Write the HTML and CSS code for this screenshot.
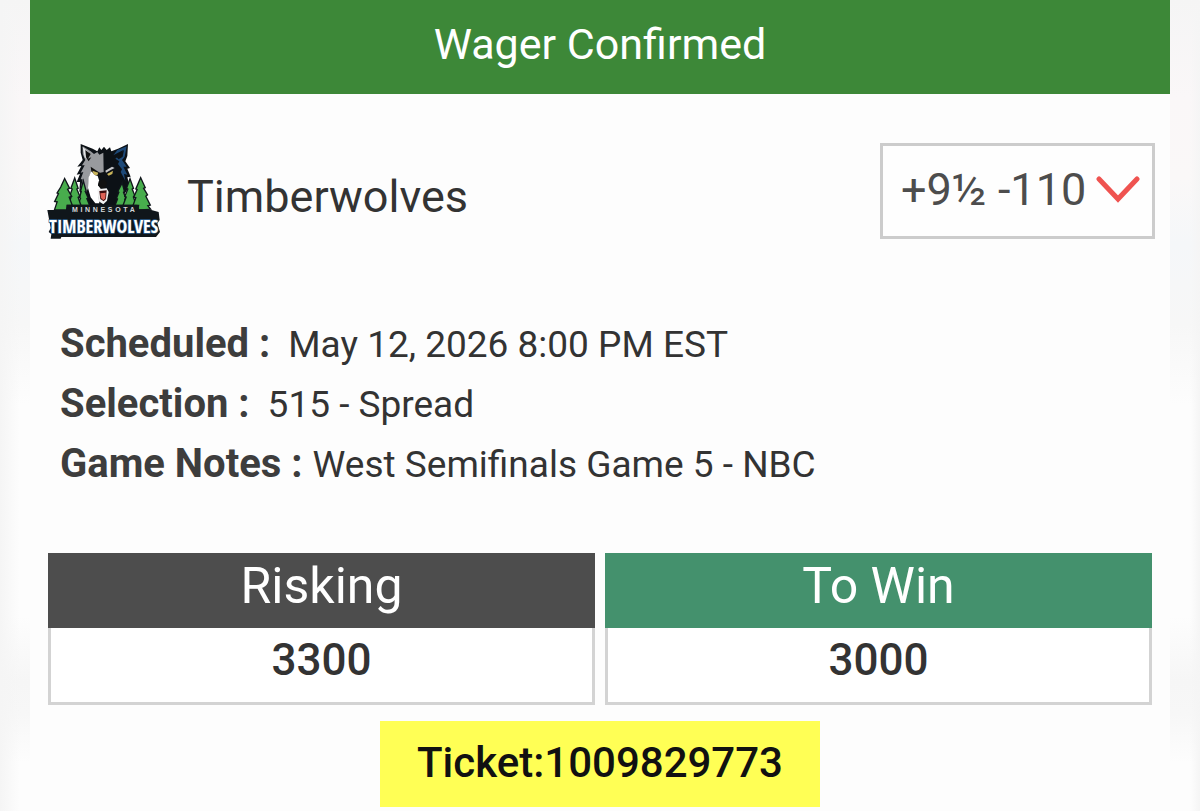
FILE: index.html
```html
<!DOCTYPE html>
<html lang="en">
<head>
  <meta charset="UTF-8">
  <meta name="viewport" content="width=device-width, initial-scale=1.0">
  <title>Wager Confirmed</title>
  <link rel="stylesheet" href="styles.css">
</head>
<body>
  <main class="wager">
    <h1 class="wager-header">Wager Confirmed</h1>

    <div class="team-row">
      <svg class="team-logo" viewBox="33 30 342 294" role="img" aria-label="Minnesota Timberwolves">
        <!-- head -->
        <path fill="#0c1116" d="M134 36L170 50L184 58L190 46L196 54L204 44L212 54L222 46L226 58L246 50L276 36L274 72L268 88L282 108L274 110L284 134L274 136L280 160L272 176L240 220H158L130 178L132 150L122 150L132 126L122 128L136 102L124 104L140 84L134 62Z"/>
        <path fill="#989a9e" d="M140 43L164 58L174 66L184 60L190 68L202 62L203 120L186 124L168 114L160 132L156 170L146 188L134 170L140 142L134 142L142 120L134 122L146 100L138 100L148 84L140 66Z"/>
        <path fill="#e6e7e9" d="M140 45L160 62L152 66L156 82L146 76Z"/>
        <path fill="#111" d="M148 54L164 66L156 80L166 76L158 88L150 76Z"/>
        <path fill="#fff" d="M166 116L184 128L190 148L186 160L194 170L188 180V196L190 214H178L164 196L156 168L158 136Z"/>
        <path fill="#1d4978" d="M272 43L266 74L258 84L272 104L262 104L274 128L264 126L268 146L254 120L258 112L246 96L250 88L238 80L254 66L262 54L246 62L232 70L244 54Z"/>
        <path fill="#0c1116" d="M254 62L264 54L260 74L248 82L242 76Z"/>
        <path fill="#111" d="M164 104L182 116L194 124V134L178 130L166 118Z"/>
        <path fill="#c9b45a" d="M169 116L187 122L184 130L174 128ZM213 126L231 116L229 126L218 131Z"/>
        <path fill="#c8c9cb" d="M208 116L228 104L236 108L224 114L210 122Z"/>
        <path fill="#111" d="M188 148L204 142L214 152L206 170L194 168L186 160Z"/>
        <path fill="#f2f2f2" d="M184 172L212 169L218 180L213 206L202 217L188 208Z"/>
        <path fill="#3b0c0e" d="M190 177L212 175L210 201L203 208L193 201Z"/>
        <path fill="#df6256" d="M193 184L209 182L208 199L202 205L195 198Z"/>
        <!-- trees -->
        <g class="logo-trees">
          <path d="M142 154L148 176L145 177L154 197L150 199L158 218H128L136 198L133 196L138 178L136 176Z"/>
          <path d="M116 144L124 168L120 170L129 192L124 195L132 218H100L107 196L103 193L111 170L107 168Z"/>
          <path d="M86 144L98 168L92 171L104 192L97 194L106 218L92 218L90 232H58L66 208L59 207L70 184L66 182L76 166Z"/>
          <path d="M258 158L263 178L260 180L267 198L264 201L269 218H240L247 200L244 198L251 180L248 178Z"/>
          <path d="M282 146L290 168L286 170L294 190L290 194L298 218H264L273 194L269 192L278 170L274 168Z"/>
          <path d="M314 142L325 166L320 168L332 188L327 192L340 218L332 220L340 230L310 232L304 218H294L302 196L296 194L306 172L302 170Z"/>
        </g>
        <!-- banner -->
        <path fill="#10161b" d="M92 218H310L308 232L346 234L368 240L371 264L364 274L372 300L360 315H76L74 320H44L46 306L38 300L44 288L34 234L92 234Z"/>
        <text class="logo-city" x="206" y="241" text-anchor="middle">MINNESOTA</text>
        <text class="logo-name" x="203" y="303" text-anchor="middle">TIMBERWOLVES</text>
      </svg>
      <h2 class="team-name">Timberwolves</h2>
      <button type="button" class="price">
        <span>+9½ -110</span>
        <svg class="price-arrow" viewBox="0 0 44 28" aria-hidden="true">
          <path d="M3 4L22 24L41 4"/>
        </svg>
      </button>
    </div>

    <dl class="details">
      <div class="detail">
        <dt>Scheduled :</dt>
        <dd>May 12, 2026 8:00 PM EST</dd>
      </div>
      <div class="detail">
        <dt>Selection :</dt>
        <dd>515 - Spread</dd>
      </div>
      <div class="detail detail-notes">
        <dt>Game Notes :</dt>
        <dd>West Semifinals Game 5 - NBC</dd>
      </div>
    </dl>

    <dl class="amounts">
      <div class="amount">
        <dt>Risking</dt>
        <dd>3300</dd>
      </div>
      <div class="amount amount-win">
        <dt>To Win</dt>
        <dd>3000</dd>
      </div>
    </dl>

    <p class="ticket">Ticket:1009829773</p>
  </main>
</body>
</html>
```
FILE: styles.css
```css
* {
  box-sizing: border-box;
}
body {
  margin: 0;
  padding: 0 30px;
  min-height: 100vh;
  background:
    linear-gradient(to right, #f5f5f5, #f5f5f500 20px, #f5f5f500 calc(100% - 10px), #f5f5f5),
    linear-gradient(#f5f5f5, #faf7f8 12%, #faf8f8 22%, #f5f7f9 30%, #f7f7f7 40%, #fdfdfd 50%, #fdfdfd 76%, #f6f6f6 84%, #f7f7f7 88%, #fdfdfd 94%);
  color: #333;
  font-family: Roboto, "Liberation Sans", sans-serif;
}
h1, h2, dl, dd, p {
  margin: 0;
  font-weight: 400;
}
.wager {
  display: flex;
  flex-direction: column;
  min-height: 100vh;
  background-color: #fdfdfd;
}
.wager-header {
  padding: 14px 0 20px;
  background-color: #3d8838;
  color: #fff;
  font-size: 43px;
  line-height: 60px;
  text-align: center;
}
.team-row {
  display: flex;
  align-items: center;
  gap: 26px;
  padding: 48px 15px 0 17px;
}
.team-logo {
  width: 114px;
  height: 98px;
}
.logo-trees {
  fill: #48ad4d;
  stroke: #10161b;
  stroke-width: 8px;
  paint-order: stroke;
}
.logo-city {
  fill: #d5d7d9;
  font: 700 21px "Liberation Sans", sans-serif;
  letter-spacing: 8px;
}
.logo-name {
  fill: #fff;
  stroke: #2d5f8c;
  stroke-width: 4px;
  paint-order: stroke;
  font: 700 54px "Liberation Sans Narrow", "Open Sans Condensed", "Liberation Sans", sans-serif;
}
.team-name {
  flex: 1;
  padding-top: 12px;
  font-size: 45px;
  line-height: 60px;
}
.price {
  display: flex;
  align-items: center;
  justify-content: space-between;
  width: 275px;
  height: 96px;
  padding: 0 12px 4px 18px;
  border: 3px solid #ccc;
  background-color: #fefefe;
  color: #4d4d4d;
  font-family: inherit;
  font-size: 45px;
}
.price-arrow {
  width: 44px;
  height: 28px;
  fill: none;
  stroke: #ef5350;
  stroke-width: 5;
  stroke-linecap: round;
}
.details {
  padding: 74px 30px 0;
}
.detail {
  display: flex;
  align-items: baseline;
  gap: 18px;
  line-height: 60px;
}
.detail-notes {
  gap: 10px;
}
.detail dt {
  color: #3d3d3d;
  font-size: 40px;
  font-weight: 700;
}
.detail dd {
  font-size: 37px;
  line-height: 50px;
}
.amounts {
  display: grid;
  grid-template-columns: 1fr 1fr;
  gap: 10px;
  padding: 59px 18px 0;
  text-align: center;
}
.amount dt {
  padding-bottom: 8px;
  background-color: #4d4d4d;
  color: #fff;
  font-size: 50px;
  line-height: 67px;
}
.amount-win dt {
  background-color: #44916d;
}
.amount dd {
  padding-bottom: 10px;
  border: 3px solid #d3d3d3;
  border-top: 0;
  background-color: #fff;
  font-size: 44px;
  font-weight: 500;
  line-height: 64px;
}
.ticket {
  align-self: center;
  margin-top: 16px;
  padding: 0 37px 2px;
  background-color: #ffff55;
  color: #111;
  font-size: 42px;
  font-weight: 500;
  line-height: 84px;
}
```
